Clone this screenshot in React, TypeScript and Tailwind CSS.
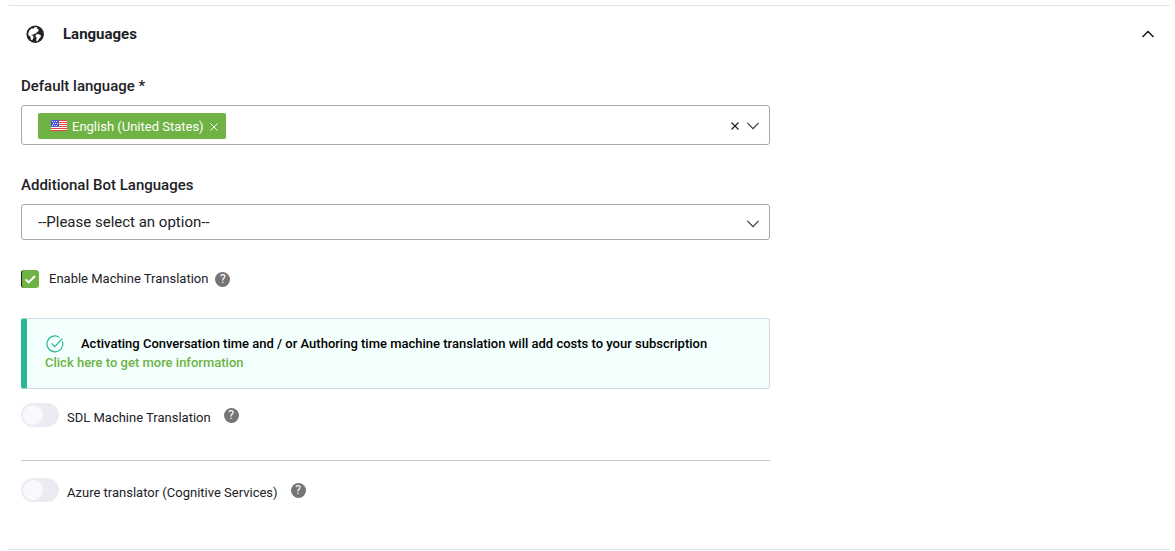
import { useState } from 'react'
import { ChevronUp } from 'lucide-react'

function GlobeIcon() {
  return (
    <svg className="h-[18px] w-[18px]" viewBox="0 0 18 18" aria-hidden="true">
      <circle cx="9.2" cy="9.2" r="8.7" fill="#212126" />
      <path
        fill="#fff"
        d="M2.2 8.6 3.4 5.6 5.8 3.2 7.4 3.8 8.4 2.2 11.4 2.2 11 3.6 12.8 4.6 12.2 6.4 10.8 7 10.4 8.4 8.6 8.4 7.6 9.8 6 9.4 5.2 10 7 10.8 7.6 12.6 6.2 15.2 4.8 14.4 4.4 11.6 2.6 10.4zM9.8 9.8 12 9 14.6 10 14.8 12 13.2 13.6 12 15.8 10.6 16.4 10.2 14.6 10.8 12.8 9.4 11.4z"
      />
    </svg>
  )
}

function UsFlag() {
  return (
    <svg className="h-3 w-4" viewBox="0 0 16 12" shapeRendering="crispEdges" aria-hidden="true">
      <rect width="16" height="11" fill="#fff" />
      <path fill="#e8413f" d="M0 0h16v1H0zM0 2h16v1H0zM0 4h16v1H0zM0 6h16v1H0zM0 8h16v1H0zM0 10h16v1H0z" />
      <rect width="8" height="7" fill="#4d55d8" />
      <path fill="#dfe1ff" d="M1 1h1v1H1zM3 1h1v1H3zM5 1h1v1H5zM2 3h1v1H2zM4 3h1v1H4zM6 3h1v1H6zM1 5h1v1H1zM3 5h1v1H3zM5 5h1v1H5z" />
    </svg>
  )
}

function CrossIcon({ className }: { className: string }) {
  return (
    <svg className={className} viewBox="0 0 8 8" fill="none" stroke="currentColor" aria-hidden="true">
      <path d="M0.5 0.5 7.5 7.5M7.5 0.5 0.5 7.5" />
    </svg>
  )
}

function DropdownArrow() {
  return (
    <svg className="h-2 w-3" viewBox="0 0 12 8" fill="none" stroke="#333" aria-hidden="true">
      <path d="M0.4 0.8 6 6.6 11.6 0.8" strokeWidth="1.1" />
    </svg>
  )
}

function HelpButton({ label }: { label: string }) {
  return (
    <button
      type="button"
      aria-label={label}
      className="flex h-[15px] w-[15px] items-center justify-center rounded-full bg-[#757575] text-[12px] leading-none text-white"
    >
      ?
    </button>
  )
}

function Toggle({ id, label }: { id: string; label: string }) {
  const [on, setOn] = useState(false)

  return (
    <div className="flex h-6 items-center">
      <input
        id={id}
        type="checkbox"
        role="switch"
        checked={on}
        onChange={() => setOn(!on)}
        className="h-6 w-[38px] cursor-pointer appearance-none rounded-full bg-[#ebecf2] p-0.5 before:block before:h-5 before:w-5 before:rounded-full before:bg-[#f8f9fc] checked:bg-[#6fb344] checked:before:translate-x-3.5"
      />
      <label htmlFor={id} className="ml-2 pt-1.5 text-[13px] leading-5">
        {label}
      </label>
      <div className="ml-[13px]">
        <HelpButton label={`About ${label}`} />
      </div>
    </div>
  )
}

export default function App() {
  const [language, setLanguage] = useState('English (United States)')
  const [translate, setTranslate] = useState(true)

  return (
    <main className="bg-white pt-[5px] pr-[5px] pl-[9px] font-['Roboto','Liberation_Sans',sans-serif] text-[#212126]">
      <section className="border-y border-[#e1e1ea] px-3 pb-[47px]">
        <header className="flex h-14 items-center">
          <div className="ml-[5px]">
            <GlobeIcon />
          </div>
          <h2 className="ml-[19px] text-[15px] font-bold">Languages</h2>
          <button type="button" aria-label="Collapse languages" className="ml-auto">
            <ChevronUp className="h-5 w-5" strokeWidth={2} />
          </button>
        </header>

        <div className="w-full max-w-[749px]">
          <label htmlFor="default-language" className="mt-3.5 block text-[15px] leading-5 font-medium">
            Default language *
          </label>
          <div className="mt-[9px] flex h-10 items-center rounded-[3px] border border-[#aaa] pt-0.5 pr-2.5 pl-4">
            {language && (
              <span className="flex h-[26px] items-center rounded-[2px] bg-[#6fb344] pr-2 pl-[13px] text-[13px] text-white">
                <UsFlag />
                <span className="ml-[5px] pt-0.5 leading-5">{language}</span>
                <button type="button" aria-label="Remove language" className="ml-[6px] pt-0.5" onClick={() => setLanguage('')}>
                  <CrossIcon className="h-2 w-2" />
                </button>
              </span>
            )}
            <input id="default-language" type="text" className="min-w-0 flex-1 px-2 text-[13px] outline-none" />
            <button type="button" aria-label="Clear all" onClick={() => setLanguage('')}>
              <CrossIcon className="h-2 w-2 stroke-[1.2]" />
            </button>
            <button type="button" aria-label="Open language list" className="ml-2">
              <DropdownArrow />
            </button>
          </div>

          <label htmlFor="bot-languages" className="mt-[30px] block text-[15px] leading-5 font-medium">
            Additional Bot Languages
          </label>
          <div className="relative mt-[9px]">
            <select
              id="bot-languages"
              className="block h-9 w-full appearance-none rounded-[3px] border border-[#aaa] bg-white pr-8 pl-4 text-[15px]"
            >
              <option>--Please select an option--</option>
            </select>
            <div className="pointer-events-none absolute inset-y-0 right-[11px] flex items-center pt-1">
              <DropdownArrow />
            </div>
          </div>

          <div className="mt-[29px] flex h-5 items-center">
            <div className="relative h-[18px] w-[18px]">
              <input
                id="machine-translation"
                type="checkbox"
                checked={translate}
                onChange={() => setTranslate(!translate)}
                className="block h-[18px] w-[18px] appearance-none rounded-[3px] border border-[#aaa] checked:border-0 checked:border-l checked:border-[#212126] checked:bg-[#6fb344]"
              />
              {translate && (
                <svg className="pointer-events-none absolute inset-0" viewBox="0 0 18 18" fill="none" stroke="#fff" aria-hidden="true">
                  <path d="M4.6 9.4 7.6 12.4 14 6" strokeWidth="2" />
                </svg>
              )}
            </div>
            <label htmlFor="machine-translation" className="ml-2.5 text-[13px] leading-5">
              Enable Machine Translation
            </label>
            <div className="ml-[7px]">
              <HelpButton label="About machine translation" />
            </div>
          </div>

          <div className="mt-[29px] rounded-[3px] border border-l-[6px] border-[#cfd8e3] border-l-[#2db695] bg-[#f2fffd] pt-[15px] pb-4 pl-[18px] text-[13px] leading-[19px] font-medium">
            <div className="flex items-center text-black">
              <svg className="ml-px h-[18px] w-[18px]" viewBox="0 0 18 18" fill="none" stroke="#2db695" aria-hidden="true">
                <path d="M16.4 6.4A7.9 7.9 0 1 1 13.4 2.4" strokeWidth="1.2" />
                <path d="M5.6 8.4 8.8 11.6 16.4 3.6" strokeWidth="1.3" />
              </svg>
              <p className="ml-[17px]">
                Activating Conversation time and / or Authoring time machine translation will add costs to your subscription
              </p>
            </div>
            <a href="#pricing" className="block w-fit text-[#6fb344]">
              Click here to get more information
            </a>
          </div>

          <div className="mt-3.5">
            <Toggle id="sdl" label="SDL Machine Translation" />
          </div>
          <hr className="mt-[33px] mb-[17px] border-[#c8c8c8]" />
          <Toggle id="azure" label="Azure translator (Cognitive Services)" />
        </div>
      </section>
    </main>
  )
}
